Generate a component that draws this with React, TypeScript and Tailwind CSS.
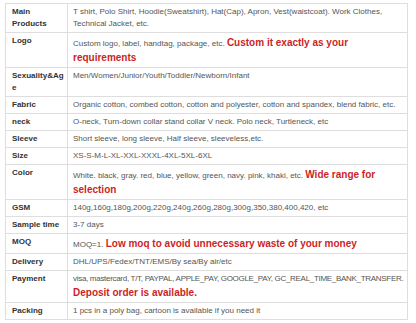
import React from "react";

type Row = { label: React.ReactNode; value: React.ReactNode };

const R = ({ children }: { children: React.ReactNode }) => (
  <span className="text-[10px] leading-[15px] font-bold text-[#cc1f26]">{children}</span>
);

const rows: Row[] = [
  {
    label: (
      <>
        Main
        <br />
        Products
      </>
    ),
    value:
      "T shirt, Polo Shirt, Hoodie(Sweatshirt), Hat(Cap), Apron, Vest(waistcoat). Work Clothes, Technical Jacket, etc.",
  },
  {
    label: "Logo",
    value: (
      <>
        Custom logo, label, handtag, package, etc. <R>Custom it exactly as your requirements</R>
      </>
    ),
  },
  {
    label: (
      <>
        Sexuality&amp;Ag
        <br />e
      </>
    ),
    value: "Men/Women/Junior/Youth/Toddler/Newborn/Infant",
  },
  {
    label: "Fabric",
    value:
      "Organic cotton, combed cotton, cotton and polyester, cotton and spandex, blend fabric, etc.",
  },
  { label: "neck", value: "O-neck, Turn-down collar stand collar V neck. Polo neck, Turtleneck, etc" },
  { label: "Sleeve", value: "Short sleeve, long sleeve, Half sleeve, sleeveless,etc." },
  { label: "Size", value: "XS-S-M-L-XL-XXL-XXXL-4XL-5XL-6XL" },
  {
    label: "Color",
    value: (
      <>
        White. black, gray. red, blue, yellow, green, navy. pink, khaki, etc. <R>Wide range for selection</R>
      </>
    ),
  },
  { label: "GSM", value: "140g,160g,180g,200g,220g,240g,260g,280g,300g,350,380,400,420, etc" },
  { label: "Sample time", value: "3-7 days" },
  {
    label: "MOQ",
    value: (
      <>
        MOQ=1. <R>Low moq to avoid unnecessary waste of your money</R>
      </>
    ),
  },
  { label: "Delivery", value: "DHL/UPS/Fedex/TNT/EMS/By sea/By air/etc" },
  {
    label: "Payment",
    value: (
      <>
        <span className="whitespace-nowrap tracking-[-0.3px]">
          visa, mastercard, T/T, PAYPAL, APPLE_PAY, GOOGLE_PAY, GC_REAL_TIME_BANK_TRANSFER.
        </span>
        <br />
        <R>Deposit order is available.</R>
      </>
    ),
  },
  { label: "Packing", value: "1 pcs in a poly bag, cartoon is available if you need it" },
];

export default function App() {
  return (
    <div
      className="w-[416px] h-[323px] bg-white pt-[3px] pl-[5px] overflow-hidden"
      style={{ fontFamily: "'Liberation Sans', Arial, sans-serif" }}
    >
      <table className="w-[403px] table-fixed border-collapse border border-[#dedede] text-[8px] leading-[12px] text-[#555]">
        <colgroup>
          <col className="w-[62px]" />
          <col />
        </colgroup>
        <tbody>
          {rows.map((r, i) => (
            <tr key={i} className="border-b border-[#dedede] align-top">
              <td className="border-r border-[#dedede] px-[6px] py-[2px] font-bold text-[#333]">
                {r.label}
              </td>
              <td className="pl-[5px] pr-[4px] py-[2px]">{r.value}</td>
            </tr>
          ))}
        </tbody>
      </table>
    </div>
  );
}
